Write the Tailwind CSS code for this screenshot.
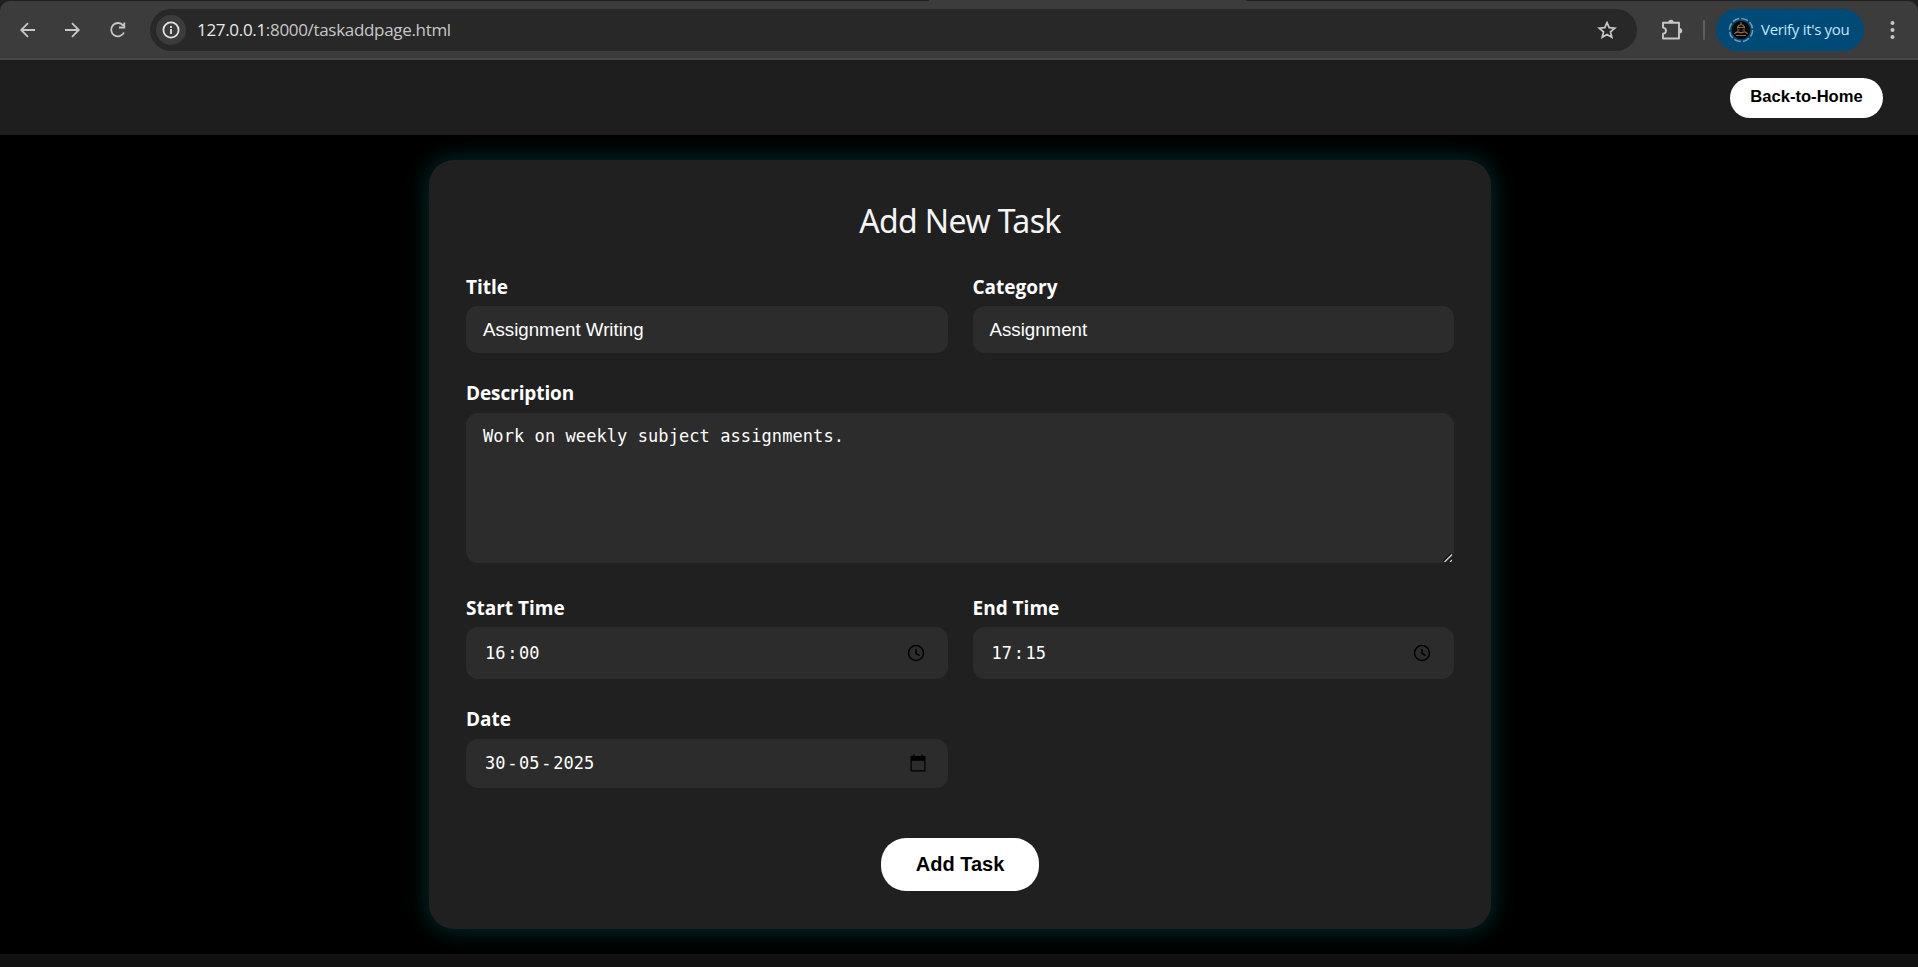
<!DOCTYPE html>
<html lang="en">
<head>
<meta charset="utf-8">
<title>Add Task</title>
<script src="https://cdn.jsdelivr.net/npm/@tailwindcss/browser@4"></script>
</head>
<body class="flex h-[967px] w-[1918px] flex-col overflow-hidden bg-black font-['Open_Sans',sans-serif] text-white">
<div class="h-[60px] shrink-0 bg-[#1f2020]">
<div class="ml-[929px] h-px w-[317px] bg-[#3c3c3c]"></div>
<div class="flex h-[59px] items-center rounded-t-[10px] border-b-2 border-[#474747] bg-[#3c3c3c]">
  <svg class="ml-[18px] size-5" viewBox="0 0 20 20" fill="none" stroke="#c7c7c7" stroke-width="1.8"><path d="M17 10H3.5M10 3.2 3.2 10l6.8 6.8"/></svg>
  <svg class="ml-[25px] size-5" viewBox="0 0 20 20" fill="none" stroke="#c7c7c7" stroke-width="1.8"><path d="M2 10h13.5M9 3.2l6.8 6.8L9 16.800"/></svg>
  <svg class="ml-[25px] size-5" viewBox="0 0 20 20" fill="none" stroke="#c7c7c7" stroke-width="1.8"><path d="M15.200 5.600A6.700 6.700 0 1 0 16 12.500M16.300 2.500v5h-5.300"/></svg>
  <div class="ml-[22px] flex h-[42px] w-[1487px] items-center rounded-full bg-[#282828] pl-[6px] pr-[20px]">
    <div class="flex size-[30px] items-center justify-center rounded-full bg-[#3c3c3c]">
      <svg class="size-[18px]" viewBox="0 0 18 18" fill="none" stroke="#e3e3e3" stroke-width="1.8"><circle cx="9" cy="9" r="7.6"/><path d="M9 8v5M9 5v1.9"/></svg>
    </div>
    <div class="ml-[11px] pt-px text-[17px] leading-6 tracking-[-0.32px] text-[#c7c7c7]"><span class="text-[#e8e8e8]">127.0.0.1</span>:8000/taskaddpage.html</div>
    <svg class="ml-auto size-5" viewBox="0 0 20 20" fill="none" stroke="#c7c7c7" stroke-width="1.7"><path d="m10 2.6 2.200 5.100 5.600.5-4.300 3.700 1.300 5.400-4.800-2.900-4.800 2.900 1.300-5.400-4.300-3.700 5.600-.5z"/></svg>
  </div>
  <svg class="ml-[24px] h-[22px] w-[22px]" viewBox="0 0 22 22"><path d="M2 3.800h16v15.700H2v-4.700c4-.5 4-5.700 0-6.200z" fill="none" stroke="#c7c7c7" stroke-width="1.900" stroke-linejoin="round"/><path d="M7.300 3.500a2.700 2.700 0 0 1 5.400 0zM18.500 9a2.700 2.700 0 0 1 0 5.400z" fill="#c7c7c7"/></svg>
  <div class="ml-5 h-5 w-[2px] rounded bg-[#5e5e5e]"></div>
  <div class="ml-[11px] flex h-[42px] w-[148px] items-center rounded-full bg-[#004a77] pl-3">
    <svg class="size-[26px]" viewBox="0 0 26 26" fill="none"><circle cx="13" cy="13" r="11.600" stroke="#6f9cb5" stroke-width="1.500" stroke-dasharray="7 2.110"/><circle cx="13" cy="13" r="9.300" fill="#080808"/><path d="M13 5.500v2M9.500 11.500c-.5-5 7.500-5 7 0M10 10.500h6M9 13h2.500M14.500 13H17M6.500 17c1.500-3 3.500-2.500 6.500-1 3-1.500 5-2 6.500 1M8 18.500h10M10.500 15.500h5" stroke="#8a6b42" stroke-width="1.200"/></svg>
    <span class="ml-[7px] text-[15px] tracking-[-0.3px] whitespace-nowrap text-[#c2e7ff]">Verify it's you</span>
  </div>
  <svg class="ml-[18px] size-5" viewBox="0 0 20 20" fill="#c7c7c7"><circle cx="10.500" cy="3" r="2"/><circle cx="10.500" cy="10" r="2"/><circle cx="10.500" cy="17" r="2"/></svg>
</div>
</div>
<header class="flex h-[75px] shrink-0 items-center justify-end bg-[#1e1e1e] pt-px pr-[35px]">
  <button class="h-10 w-[153px] rounded-[20px] bg-white pb-px font-['Liberation_Sans',sans-serif] text-[16.600px] font-bold text-black">Back-to-Home</button>
</header>
<main class="h-[819px] shrink-0 pt-[25px]">
  <form class="ml-[429px] flex h-[769px] w-[1062px] flex-col rounded-[25px] bg-[#202020] px-[37px] pt-[38px] shadow-[0_0_25px_rgba(0,255,255,0.2)]">
    <h2 class="h-[45px] text-center font-['Noto_Sans',sans-serif] text-[32px] leading-[45px] tracking-[-0.6px] text-[#f5f5f5]">Add New Task</h2>
    <div class="mt-[30px] grid grid-cols-2 gap-x-[25px] text-[19px] font-bold leading-[26px]">
      <div class="h-[106px]"><label class="block h-[33px] pt-px">Title</label><div class="flex h-[47px] items-center rounded-[12px] bg-[#2c2c2c] px-[17px] font-['Liberation_Sans',sans-serif] text-[18.700px] font-normal">Assignment Writing</div></div>
      <div><label class="block h-[33px] pt-px">Category</label><div class="flex h-[47px] items-center rounded-[12px] bg-[#2c2c2c] px-[17px] font-['Liberation_Sans',sans-serif] text-[18.700px] font-normal">Assignment</div></div>
      <div class="col-span-2 h-[215px]"><label class="block h-[34px] pt-px tracking-[-0.1px]">Description</label><div class="relative h-[150px] rounded-[12px] bg-[#2c2c2c] px-[17px] pt-[11px] font-['DejaVu_Sans_Mono',monospace] text-[17px] font-normal leading-[24px] tracking-[0.08px]">Work on weekly subject assignments.<svg class="absolute right-[2px] bottom-px size-[9px]" viewBox="0 0 9 9"><path d="M0 8.500 8.500 0M5 9l4-4" stroke="#151515" stroke-width="1.500"/><path d="M1.500 9 9 1.500M7 9l2-2" stroke="#d0d0d0" stroke-width="1.300"/></svg></div></div>
      <div class="h-[111px]"><label class="block h-[33px] pt-px">Start Time</label><div class="flex h-[52px] items-center justify-between rounded-[12px] bg-[#2c2c2c] pl-[19px] pr-[23px] font-['DejaVu_Sans_Mono',monospace] text-[17px] font-normal"><div>16<span class="px-[1.700px]">:</span>00</div><svg class="size-[18px]" viewBox="0 0 18 18" fill="none" stroke="#000" stroke-width="1.500"><circle cx="9" cy="9" r="7.500"/><path d="M9 5v4.500l3.500 2"/></svg></div></div>
      <div><label class="block h-[33px] pt-px">End Time</label><div class="flex h-[52px] items-center justify-between rounded-[12px] bg-[#2c2c2c] pl-[19px] pr-[23px] font-['DejaVu_Sans_Mono',monospace] text-[17px] font-normal"><div>17<span class="px-[1.700px]">:</span>15</div><svg class="size-[18px]" viewBox="0 0 18 18" fill="none" stroke="#000" stroke-width="1.500"><circle cx="9" cy="9" r="7.500"/><path d="M9 5v4.500l3.500 2"/></svg></div></div>
      <div class="h-[133px]"><label class="block h-[34px] pt-px">Date</label><div class="flex h-[49px] items-center justify-between rounded-[12px] bg-[#2c2c2c] pb-px pl-[19px] pr-[21px] font-['DejaVu_Sans_Mono',monospace] text-[17px] font-normal"><div>30<span class="px-[1.700px]">-</span>05<span class="px-[1.700px]">-</span>2025</div><svg class="size-[18px]" viewBox="0 0 18 18"><path d="M1.500 2h15v15.500h-15zm1.200 4.800v9.500h12.600V6.800zM4 .5h1.500V2H4zM12.500.5H14V2h-1.500z" fill="#000" fill-rule="evenodd"/></svg></div></div>
    </div>
    <button type="button" class="h-[53px] w-[158px] shrink-0 self-center rounded-[25px] bg-white pb-[2px] font-['Liberation_Sans',sans-serif] text-[20px] font-bold text-black">Add Task</button>
  </form>
</main>
<footer class="h-[13px] shrink-0 bg-[#111]"></footer>
</body>
</html>
